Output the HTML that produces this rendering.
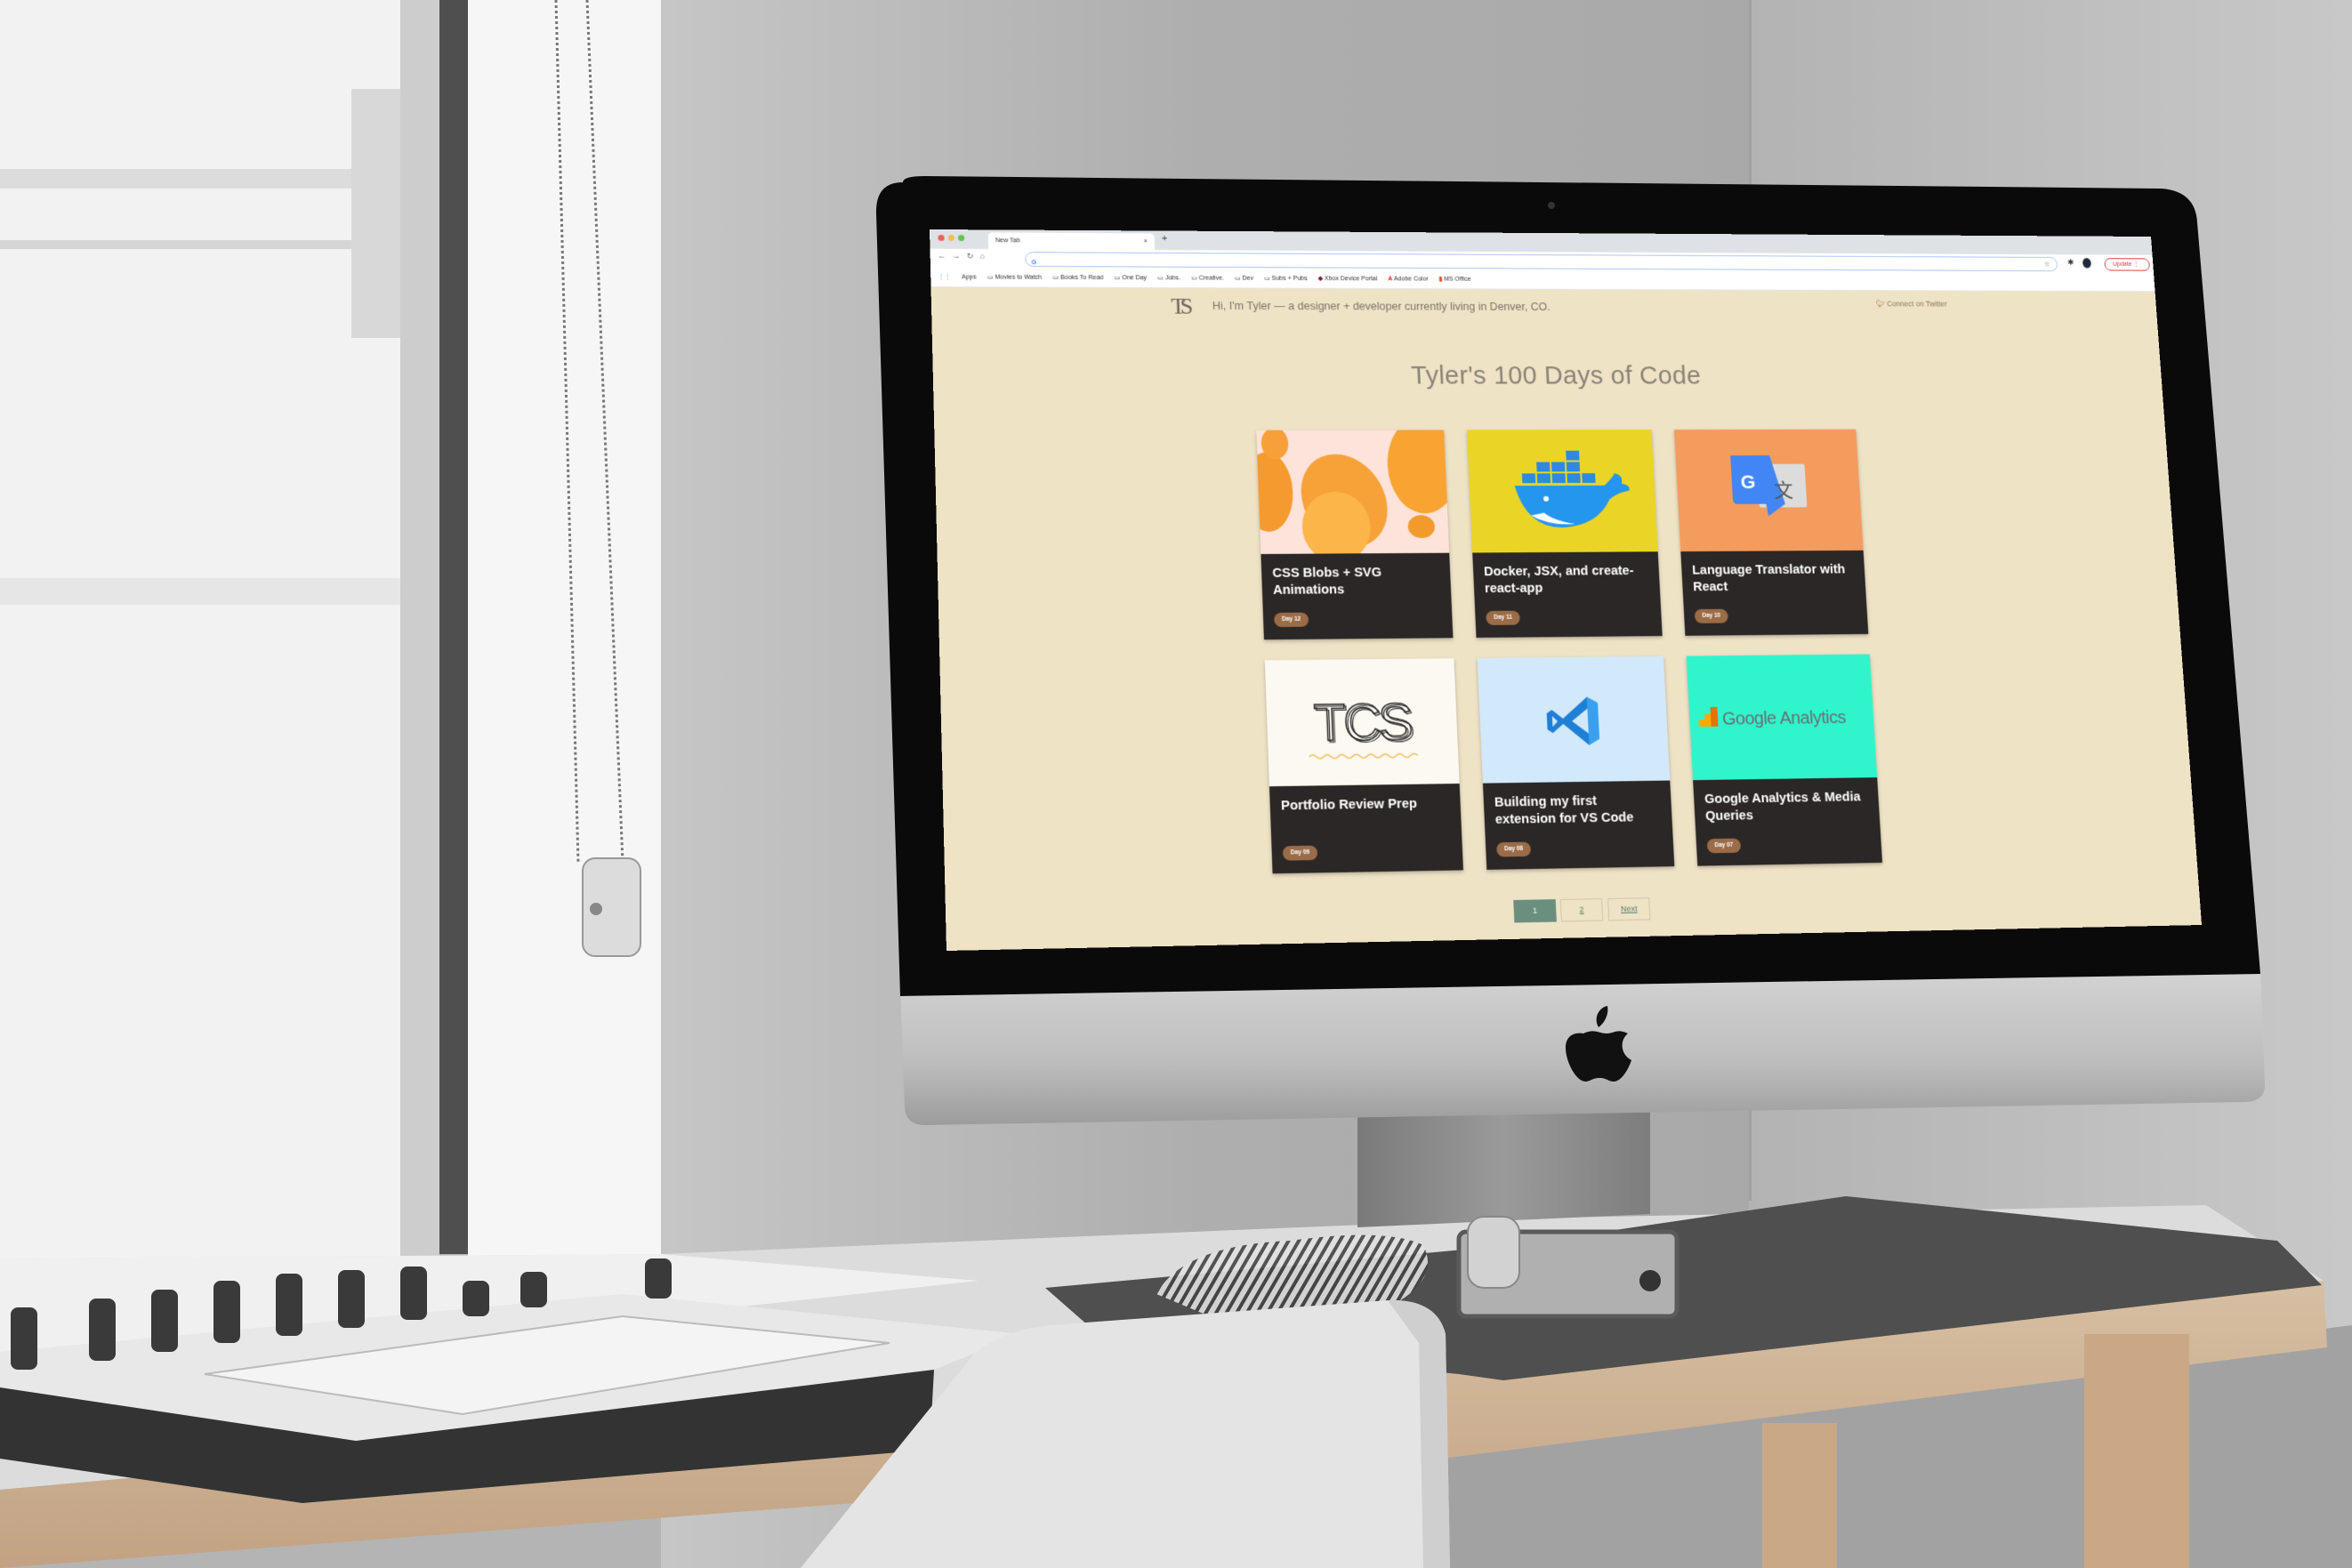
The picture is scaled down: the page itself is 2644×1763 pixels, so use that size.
<!DOCTYPE html>
<html><head><meta charset="utf-8">
<style>
html,body{margin:0;padding:0;width:2644px;height:1763px;overflow:hidden;background:#b4b4b4;font-family:"Liberation Sans",sans-serif}
#scene{position:absolute;left:0;top:0}
#screen{position:absolute;left:0;top:0;width:1400px;height:800px;transform-origin:0 0;
transform:matrix3d(1.061414,0.014593,0,0.00003337,-0.014575,0.975238,0,-0.00003602,0,0,1,0,1045,258,0,1);
background:#efe3c6;overflow:hidden}
.tabbar{position:absolute;left:0;top:0;width:1400px;height:22px;background:#dee1e6}
.tab{position:absolute;left:64px;top:3px;width:184px;height:19px;background:#fff;border-radius:5px 5px 0 0;font-size:7px;color:#333;line-height:19px;text-indent:8px}
.dot{position:absolute;top:6px;width:7px;height:7px;border-radius:50%}
.toolbar{position:absolute;left:0;top:22px;width:1400px;height:23px;background:#fff}
.addr{position:absolute;left:104px;top:3px;width:1180px;height:15px;border:1px solid #a7c4f3;border-radius:9px;background:#fff}
.upd{position:absolute;left:1342px;top:4px;width:52px;height:13px;border:1px solid #d33;border-radius:7px;font-size:7px;color:#c33;line-height:13px;text-indent:9px}
.bm{position:absolute;left:0;top:45px;width:1400px;height:20px;background:#fff;border-bottom:1px solid #e4e4e4;font-size:7px;color:#333;line-height:20px;white-space:nowrap}
.bm span{margin-right:12px}
.hdr{position:absolute;left:310px;top:79px;font-size:12.5px;color:#7a736a}
.logo{position:absolute;left:264px;top:72px;font-size:26px;font-family:"Liberation Serif",serif;color:#6d655a;letter-spacing:-6px}
.tw{position:absolute;left:1068px;top:76px;font-size:8.5px;color:#8d7760}
h1{position:absolute;left:0;width:1390px;top:150px;margin:0;text-align:center;font-weight:normal;font-size:29px;color:#8a8378;letter-spacing:0.3px}
.card{position:absolute;width:210px;height:236px;background:#2b2726;box-shadow:0 2px 4px rgba(0,0,0,.25);overflow:hidden}
.img{position:absolute;left:0;top:0;width:210px;height:140px;overflow:hidden}
.t{position:absolute;left:12px;top:153px;width:180px;color:#fff;font-weight:bold;font-size:14.5px;line-height:19px}
.pill{position:absolute;left:12px;top:206px;width:38px;height:16px;border-radius:8px;background:#9b6c48;color:#fff;font-size:6.5px;font-weight:bold;text-align:center;line-height:16px}
.pg{position:absolute;top:757px;width:45px;height:23px;border:1px solid #cfc5ae;font-size:9px;text-align:center;line-height:23px;color:#5b7d6e;text-decoration:underline}
</style></head><body>
<svg id="scene" width="2644" height="1763" viewBox="0 0 2644 1763">
<defs>
<linearGradient id="wall" x1="0" x2="1" y1="0" y2="0"><stop offset="0" stop-color="#c6c6c6"/><stop offset="0.5" stop-color="#aeaeae"/><stop offset="1" stop-color="#a9a9a9"/></linearGradient>
<linearGradient id="wall2" x1="0" x2="1"><stop offset="0" stop-color="#b3b3b3"/><stop offset="1" stop-color="#c8c8c8"/></linearGradient>
<linearGradient id="chin" x1="0" x2="0" y1="0" y2="1"><stop offset="0" stop-color="#d4d4d4"/><stop offset="0.6" stop-color="#bdbdbd"/><stop offset="1" stop-color="#9c9c9c"/></linearGradient>
<linearGradient id="stand" x1="0" x2="1"><stop offset="0" stop-color="#7a7a7a"/><stop offset="0.5" stop-color="#9a9a9a"/><stop offset="1" stop-color="#7d7d7d"/></linearGradient>
<linearGradient id="wood" x1="0" x2="0" y1="0" y2="1"><stop offset="0" stop-color="#d7bfa3"/><stop offset="1" stop-color="#c2a283"/></linearGradient>
<pattern id="stripe" width="10" height="10" patternUnits="userSpaceOnUse" patternTransform="rotate(30)"><rect width="10" height="10" fill="#e0e0e0"/><rect width="4" height="10" fill="#444"/></pattern>
</defs>
<rect x="743" y="0" width="1223" height="1763" fill="url(#wall)"/>
<rect x="1966" y="0" width="678" height="1763" fill="url(#wall2)"/>
<rect x="0" y="0" width="450" height="1420" fill="#f2f2f2"/>
<rect x="0" y="190" width="400" height="22" fill="#cdcdcd" opacity=".6"/>
<rect x="0" y="270" width="440" height="10" fill="#c2c2c2" opacity=".6"/>
<rect x="395" y="100" width="55" height="280" fill="#d8d8d8"/>
<rect x="0" y="650" width="450" height="30" fill="#e6e6e6"/>
<rect x="450" y="0" width="44" height="1420" fill="#cdcdcd"/>
<rect x="494" y="0" width="32" height="1410" fill="#4f4f4f"/>
<rect x="526" y="0" width="217" height="1420" fill="#f6f6f6"/>
<rect x="1966" y="0" width="3" height="1350" fill="#a0a0a0"/>
<path d="M625 0 L650 970 M660 0 L700 970" stroke="#777" stroke-width="3" stroke-dasharray="3 3" fill="none"/>
<rect x="655" y="965" width="65" height="110" rx="14" fill="#dcdcdc" stroke="#999" stroke-width="2"/>
<circle cx="670" cy="1022" r="7" fill="#888"/>
<polygon points="1620,1620 2644,1490 2644,1763 1620,1763" fill="#a2a2a2"/>
<polygon points="0,1415 743,1410 1700,1370 2480,1355 2612,1440 0,1675" fill="#dcdcdc"/>
<polygon points="0,1415 743,1410 1100,1440 0,1560" fill="#f0f0f0"/>
<polygon points="0,1675 2612,1440 2616,1515 1620,1640 0,1763" fill="url(#wood)"/>
<rect x="1981" y="1600" width="84" height="163" fill="#c9a985"/>
<rect x="2343" y="1500" width="118" height="263" fill="#caa886"/>
<polygon points="1175,1448 1700,1400 2075,1345 2560,1395 2610,1445 1690,1552 1640,1545 1240,1505" fill="#4f4f4f"/>
<polygon points="1526,1250 1855,1245 1855,1365 1526,1380" fill="url(#stand)"/>
<rect x="1640" y="1385" width="245" height="95" rx="8" fill="#b0b0b0" stroke="#5a5a5a" stroke-width="5"/>
<rect x="1650" y="1368" width="58" height="80" rx="18" fill="#d2d2d2" stroke="#888" stroke-width="2"/>
<circle cx="1855" cy="1440" r="12" fill="#333"/>
<path d="M1300,1455 Q1330,1400 1450,1395 Q1560,1380 1600,1400 Q1620,1440 1560,1470 Q1450,1490 1360,1480 Z" fill="url(#stripe)" opacity=".9"/>
<polygon points="0,1520 700,1455 1150,1500 1050,1540 400,1620 0,1560" fill="#e8e8e8"/>
<polygon points="0,1560 400,1620 1050,1540 1045,1630 340,1690 0,1640" fill="#333"/>
<polygon points="230,1545 700,1480 1000,1510 520,1590" fill="#f4f4f4" stroke="#bbb" stroke-width="2"/>
<g fill="#3a3a3a"><rect x="12" y="1470" width="30" height="70" rx="8"/><rect x="100" y="1460" width="30" height="70" rx="8"/><rect x="170" y="1450" width="30" height="70" rx="8"/><rect x="240" y="1440" width="30" height="70" rx="8"/><rect x="310" y="1432" width="30" height="70" rx="8"/><rect x="380" y="1428" width="30" height="65" rx="8"/><rect x="450" y="1424" width="30" height="60" rx="8"/><rect x="520" y="1440" width="30" height="40" rx="8"/><rect x="585" y="1430" width="30" height="40" rx="8"/><rect x="725" y="1415" width="30" height="45" rx="8"/></g>
<path d="M900,1763 L1096,1521 Q1130,1495 1180,1490 L1560,1462 Q1615,1460 1625,1500 L1630,1763 Z" fill="#e4e4e4"/>
<path d="M1560,1462 Q1615,1460 1625,1500 L1630,1763 L1600,1763 L1595,1510 Z" fill="#cfcfcf"/>
<path d="M1012,1110 L2541,1088 L2546,1220 Q2546,1238 2525,1239 L1040,1265 Q1018,1265 1017,1245 Z" fill="url(#chin)"/>
<path d="M1015,205 Q1015,198 1040,198 L2430,212 Q2468,215 2470,250 L2541,1095 L1012,1120 L985,240 Q984,205 1015,205 Z" fill="#0a0a0a"/>
<circle cx="1744" cy="231" r="4" fill="#333"/>
<path d="M1797,1155 c-6,-10 0,-22 10,-24 c2,10 -4,20 -10,24 z M1780,1162 c12,-6 18,0 26,0 c8,0 12,-6 24,0 c-10,8 -8,24 4,30 c-4,12 -12,24 -20,24 c-6,0 -8,-4 -16,-4 c-8,0 -10,4 -16,4 c-10,0 -22,-22 -22,-38 c0,-12 8,-18 20,-16 z" fill="#111"/>
</svg>
<div id="screen">
 <div class="tabbar">
  <div class="dot" style="left:9px;background:#ee5e56"></div><div class="dot" style="left:20px;background:#f5bd4f"></div><div class="dot" style="left:31px;background:#5fc454"></div>
  <div class="tab">New Tab<span style="position:absolute;right:8px">×</span></div>
  <div style="position:absolute;left:256px;top:3px;font-size:11px;color:#444">+</div>
 </div>
 <div class="toolbar">
  <div style="position:absolute;left:8px;top:3px;font-size:9px;color:#666;letter-spacing:7px">←→↻⌂</div>
  <div class="addr"><span style="font-size:7px;color:#4285f4;font-weight:bold;margin-left:6px;line-height:15px">G</span><span style="position:absolute;right:8px;font-size:8px;color:#555;line-height:15px">☆</span></div>
  <div style="position:absolute;left:1298px;top:4px;font-size:9px;color:#333">✱</div>
  <div style="position:absolute;left:1316px;top:4px;width:10px;height:12px;border-radius:50%;background:#1e2a3a"></div>
  <div class="upd">Update ⋮</div>
 </div>
 <div class="bm"><span style="margin-left:8px;color:#4a7">⋮⋮</span><span>Apps</span><span>▭ Movies to Watch</span><span>▭ Books To Read</span><span>▭ One Day</span><span>▭ Jobs.</span><span>▭ Creative.</span><span>▭ Dev</span><span>▭ Subs + Pubs</span><span><b style="color:#722">◆</b> Xbox Device Portal</span><span><b style="color:#d22">A</b> Adobe Color</span><span><b style="color:#d42">▮</b> MS Office</span></div>
 <div class="logo">TS</div>
 <div class="hdr">Hi, I'm Tyler — a designer + developer currently living in Denver, CO.</div>
 <div class="tw"><span style="color:#a07850">🐦︎</span> Connect on Twitter</div>
 <h1>Tyler's 100 Days of Code</h1>

 <div class="card" style="left:354px;top:228px"><div class="img" style="background:#fde3da">
  <svg width="210" height="140"><ellipse cx="95" cy="80" rx="45" ry="55" fill="#f7a238" transform="rotate(-30 95 80)"/><ellipse cx="85" cy="110" rx="38" ry="40" fill="#fbb548"/><ellipse cx="10" cy="70" rx="28" ry="45" fill="#f59a2e"/><ellipse cx="185" cy="40" rx="40" ry="55" fill="#f8a332"/><ellipse cx="180" cy="110" rx="15" ry="13" fill="#f39a2d"/><ellipse cx="20" cy="15" rx="15" ry="18" fill="#f7a03a"/></svg></div>
  <div class="t">CSS Blobs + SVG Animations</div><div class="pill">Day 12</div></div>
 <div class="card" style="left:590px;top:228px"><div class="img" style="background:#ead526">
  <svg width="210" height="140"><g transform="translate(-7,0)"><g fill="#2d8ae0"><rect x="67" y="50" width="15" height="11"/><rect x="84" y="50" width="15" height="11"/><rect x="101" y="50" width="15" height="11"/><rect x="118" y="50" width="15" height="11"/><rect x="135" y="50" width="15" height="11"/><rect x="84" y="37" width="15" height="11"/><rect x="101" y="37" width="15" height="11"/><rect x="118" y="37" width="15" height="11"/><rect x="118" y="24" width="15" height="11"/></g>
  <path d="M58,64 L160,64 Q170,55 172,50 Q182,52 180,62 Q190,64 188,70 Q175,72 165,80 Q150,110 110,112 Q70,112 58,64 Z" fill="#2496ed"/><path d="M75,98 Q95,110 125,108 Q100,104 90,95 Z" fill="#fff"/><circle cx="93" cy="79" r="3" fill="#fff"/></g></svg></div>
  <div class="t">Docker, JSX, and create-react-app</div><div class="pill">Day 11</div></div>
 <div class="card" style="left:826px;top:228px"><div class="img" style="background:#f39c5e">
  <svg width="210" height="140"><g transform="translate(-7,0)"><rect x="100" y="40" width="55" height="50" rx="3" fill="#dcdcdc"/><path d="M70,30 L115,30 L130,86 L110,100 L108,86 L75,86 Q70,86 70,80 Z" fill="#4285f4"/><text x="80" y="68" font-size="22" font-weight="bold" fill="#fff" font-family="Liberation Sans">G</text><text x="118" y="78" font-size="22" fill="#555" font-family="Noto Sans CJK SC,sans-serif">文</text></g></svg></div>
  <div class="t">Language Translator with React</div><div class="pill">Day 10</div></div>

 <div class="card" style="left:354px;top:487px"><div class="img" style="background:#fcf9f2">
  <svg width="210" height="140"><text x="105" y="90" text-anchor="middle" font-size="58" fill="none" stroke="#222" stroke-width="1.5" font-family="Liberation Sans" letter-spacing="-3">TCS</text><text x="107" y="92" text-anchor="middle" font-size="58" fill="none" stroke="#222" stroke-width="1" font-family="Liberation Sans" letter-spacing="-3">TCS</text><path d="M45,108 q4,-4 8,0 t8,0 t8,0 t8,0 t8,0 t8,0 t8,0 t8,0 t8,0 t8,0 t8,0 t8,0 t8,0 t8,0 t8,0" stroke="#f0c060" stroke-width="1.5" fill="none"/></svg></div>
  <div class="t">Portfolio Review Prep</div><div class="pill">Day 09</div></div>
 <div class="card" style="left:590px;top:487px"><div class="img" style="background:#d2e9fb">
  <svg width="210" height="140"><g transform="translate(-7,0)"><path d="M128,45 L140,52 L140,92 L128,99 L100,75 L88,85 L82,81 L82,63 L88,59 L100,69 Z M128,58 L110,72 L128,86 Z M88,66 L88,78 L94,72 Z" fill="#1f7fd6" fill-rule="evenodd"/><path d="M128,45 L140,52 L140,92 L128,99 Z" fill="#38a0ef"/></g></svg></div>
  <div class="t">Building my first extension for VS Code</div><div class="pill">Day 08</div></div>
 <div class="card" style="left:826px;top:487px"><div class="img" style="background:#30f5cc">
  <svg width="210" height="140"><rect x="10" y="72" width="8" height="8" fill="#f9ab00"/><rect x="17" y="66" width="8" height="14" fill="#f9ab00"/><rect x="24" y="58" width="8" height="22" fill="#e37400"/><text x="37" y="78" font-size="20" fill="#6a6e72" font-family="Liberation Sans" letter-spacing="-0.5">Google Analytics</text></svg></div>
  <div class="t">Google Analytics &amp; Media Queries</div><div class="pill">Day 07</div></div>

 <div class="pg" style="left:618px;background:#6b8f7e;color:#dfe;text-decoration:none;border-color:#6b8f7e">1</div>
 <div class="pg" style="left:670px">2</div>
 <div class="pg" style="left:723px">Next</div>
</div>
</body></html>
